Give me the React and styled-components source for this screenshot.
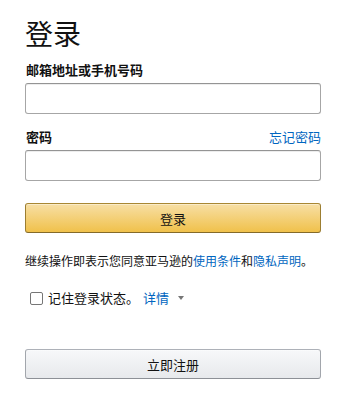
import styled, { createGlobalStyle } from "styled-components";

const GlobalStyle = createGlobalStyle`
  body {
    margin: 0;
    background: #ffffff;
    font-family: Arial, "Liberation Sans", "Noto Sans CJK SC", sans-serif;
    color: #111111;
  }
`;

const Page = styled.div`
  width: 296px;
  padding: 18px 25px 0 25px;
  display: flex;
  flex-direction: column;
`;

const Title = styled.h1`
  margin: 0;
  font-size: 28px;
  font-weight: 400;
  line-height: 36px;
  color: #111111;
`;

const FieldHead = styled.div`
  display: flex;
  justify-content: space-between;
  align-items: flex-end;
  margin-top: ${(p) => p.$top || 0}px;
  height: 19px;
  margin-bottom: 3px;
`;

const Label = styled.label`
  font-size: 13px;
  font-weight: 700;
  line-height: 19px;
  padding-left: 1px;
`;

const Link = styled.a`
  color: #0066c0;
  text-decoration: none;
  font-size: ${(p) => p.$size || 13}px;
  line-height: 19px;
  margin-left: ${(p) => p.$left || 0}px;
`;

const Input = styled.input`
  box-sizing: border-box;
  width: 100%;
  height: 31px;
  margin: 0;
  border: 1px solid #a6a6a6;
  border-top-color: #949494;
  border-radius: 3px;
  box-shadow: 0 1px 0 rgba(255, 255, 255, 0.5), 0 1px 0 rgba(0, 0, 0, 0.07) inset;
  padding: 3px 7px;
  font-size: 13px;
  outline: none;
`;

const Button = styled.button`
  box-sizing: border-box;
  width: 100%;
  height: 30px;
  margin: ${(p) => p.$top || 0}px 0 0 0;
  border: 1px solid;
  border-radius: 3px;
  font-family: inherit;
  font-size: 13px;
  color: #111111;
  cursor: pointer;
  background: ${(p) =>
    p.$primary
      ? "linear-gradient(to bottom, #f7dfa5, #f0c14b)"
      : "linear-gradient(to bottom, #f7f8fa, #e7e9ec)"};
  border-color: ${(p) =>
    p.$primary ? "#a88734 #9c7e31 #846a29" : "#adb1b8 #a2a6ac #8d9096"};
  box-shadow: 0 1px 0 rgba(255, 255, 255, 0.4) inset;
`;

const Terms = styled.p`
  margin: 20px 0 0 0;
  font-size: 12px;
  line-height: 18px;
  color: #111111;
`;

const RememberRow = styled.div`
  display: flex;
  align-items: center;
  margin-top: 17px;
  padding-left: 5px;
  font-size: 13px;
  line-height: 19px;
`;

const Check = styled.span`
  box-sizing: border-box;
  width: 13px;
  height: 13px;
  border: 1px solid #767676;
  border-radius: 2px;
  background: #ffffff;
  margin-right: 5px;
`;

const Caret = styled.span`
  display: inline-block;
  width: 0;
  height: 0;
  margin-left: 9px;
  border-left: 3px solid transparent;
  border-right: 3px solid transparent;
  border-top: 4px solid #767676;
  margin-top: -2px;
`;

export default function App() {
  return (
    <>
      <GlobalStyle />
      <Page>
        <Title>登录</Title>

        <FieldHead $top={7}>
          <Label>邮箱地址或手机号码</Label>
        </FieldHead>
        <Input type="email" />

        <FieldHead $top={14}>
          <Label>密码</Label>
          <Link href="#">忘记密码</Link>
        </FieldHead>
        <Input type="password" />

        <Button $primary $top={22}>登录</Button>

        <Terms>
          继续操作即表示您同意亚马逊的<Link $size={12} href="#">使用条件</Link>和
          <Link $size={12} href="#">隐私声明</Link>。
        </Terms>

        <RememberRow>
          <Check />
          <span>记住登录状态。</span>
          <Link href="#" $left={4}>详情</Link>
          <Caret />
        </RememberRow>

        <Button $top={41}>立即注册</Button>
      </Page>
    </>
  );
}
